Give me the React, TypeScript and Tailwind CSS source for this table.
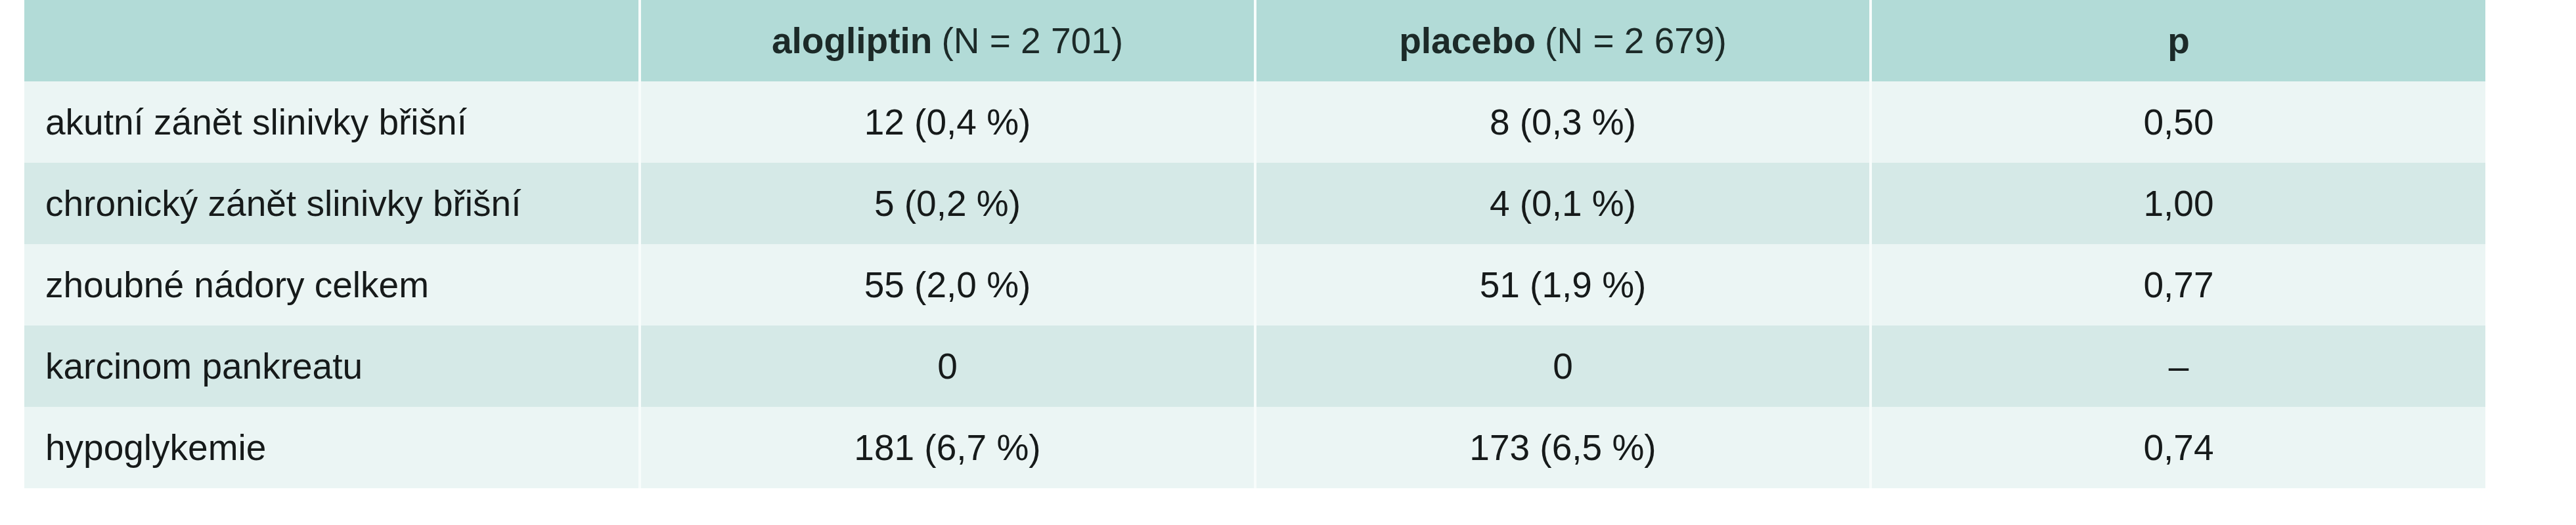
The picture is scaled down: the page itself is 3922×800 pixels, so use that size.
const rows = [
  { label: "akutní zánět slinivky břišní", a: "12 (0,4 %)", b: "8 (0,3 %)", p: "0,50" },
  { label: "chronický zánět slinivky břišní", a: "5 (0,2 %)", b: "4 (0,1 %)", p: "1,00" },
  { label: "zhoubné nádory celkem", a: "55 (2,0 %)", b: "51 (1,9 %)", p: "0,77" },
  { label: "karcinom pankreatu", a: "0", b: "0", p: "–" },
  { label: "hypoglykemie", a: "181 (6,7 %)", b: "173 (6,5 %)", p: "0,74" },
];

export default function App() {
  return (
    <div className="w-[3922px] h-[800px] bg-white font-['Liberation_Sans',Arial,sans-serif] text-[55px] text-[#161a1a]">
      <div className="ml-[37px] w-[3747px] grid grid-cols-[935px_933px_933px_934px] gap-x-[4px] bg-[#f7fcfb]">
        {/* header */}
        <div className="h-[124px] bg-[#b2dbd7]" />
        <div className="h-[124px] bg-[#b2dbd7] flex items-center justify-center text-[#1c2a28]">
          <span className="font-bold">alogliptin</span>
          <span className="ml-[14px]">(N = 2 701)</span>
        </div>
        <div className="h-[124px] bg-[#b2dbd7] flex items-center justify-center text-[#1c2a28]">
          <span className="font-bold">placebo</span>
          <span className="ml-[14px]">(N = 2 679)</span>
        </div>
        <div className="h-[124px] bg-[#b2dbd7] flex items-center justify-center font-bold text-[#1c2a28]">p</div>

        {rows.map((r, i) => {
          const bg = i % 2 === 0 ? "bg-[#ebf5f4]" : "bg-[#d5e9e7]";
          return (
            <div key={r.label} className="contents">
              <div className={`h-[124px] ${bg} flex items-center pl-[32px]`}>{r.label}</div>
              <div className={`h-[124px] ${bg} flex items-center justify-center`}>{r.a}</div>
              <div className={`h-[124px] ${bg} flex items-center justify-center`}>{r.b}</div>
              <div className={`h-[124px] ${bg} flex items-center justify-center`}>{r.p}</div>
            </div>
          );
        })}
      </div>
    </div>
  );
}
